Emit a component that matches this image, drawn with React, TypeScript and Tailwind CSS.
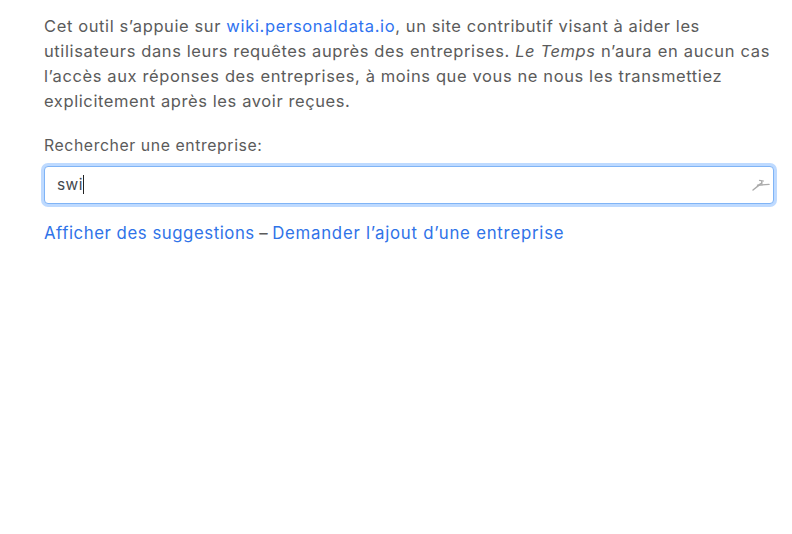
export default function App() {
  return (
    <main className="h-[534px] w-[792px] overflow-hidden bg-white pt-[14px] pl-[44px] font-['Inter',sans-serif] text-[16.5px] leading-[25px] text-[#5b5b5b]">
      <p className="whitespace-pre">
        <span className="block">
          <span className="tracking-[0.61px]">Cet outil s’appuie sur </span>
          <a className="tracking-[0.67px] text-[#2f73f0]">wiki.personaldata.io</a>
          <span className="tracking-[0.57px]">, un site contributif visant à aider les</span>
        </span>
        <span className="block">
          <span className="tracking-[0.61px]">utilisateurs dans leurs requêtes auprès des entreprises. </span>
          <em className="tracking-[0.6px]">Le Temps</em>
          <span className="tracking-[0.69px]"> n’aura en aucun cas</span>
        </span>
        <span className="block tracking-[0.61px]">l’accès aux réponses des entreprises, à moins que vous ne nous les transmettiez</span>
        <span className="block tracking-[0.6px]">explicitement après les avoir reçues.</span>
      </p>
      <label className="mt-[19px] block text-[15.8px] tracking-[0.59px]">Rechercher une entreprise:</label>
      <div className="mt-[8px] flex h-[38px] w-[730px] items-center justify-between rounded-[4px] border border-[#80b4f6] bg-white pr-[3px] pl-[12px] shadow-[0_0_0_3px_#bedaff]">
        <div className="flex items-center pb-[2px] text-[15.5px] tracking-[0.4px] text-[#45494e]">
          swi
          <span className="h-[19px] w-px bg-[#222]" />
        </div>
        <svg width="18" height="14" viewBox="0 0 18 14" fill="none" stroke="#aaaaaa" strokeLinecap="round">
          <path d="M1 12 L6.8 7.4" strokeWidth="1.4" />
          <path d="M5.5 7.2 L17 6.4" strokeWidth="1.4" />
          <path d="M7.2 6.6 L9.8 5.2 L9.8 3.4" strokeWidth="1.5" />
          <path d="M7.5 2.4 L11.5 3" strokeWidth="1.2" />
        </svg>
      </div>
      <div className="mt-[17px] whitespace-pre text-[16.8px]">
        <a className="tracking-[0.54px] text-[#2f73e8]">Afficher des suggestions</a>
        <span className="tracking-[-0.15px]"> – </span>
        <a className="tracking-[0.76px] text-[#2f73e8]">Demander l’ajout d’une entreprise</a>
      </div>
    </main>
  );
}
